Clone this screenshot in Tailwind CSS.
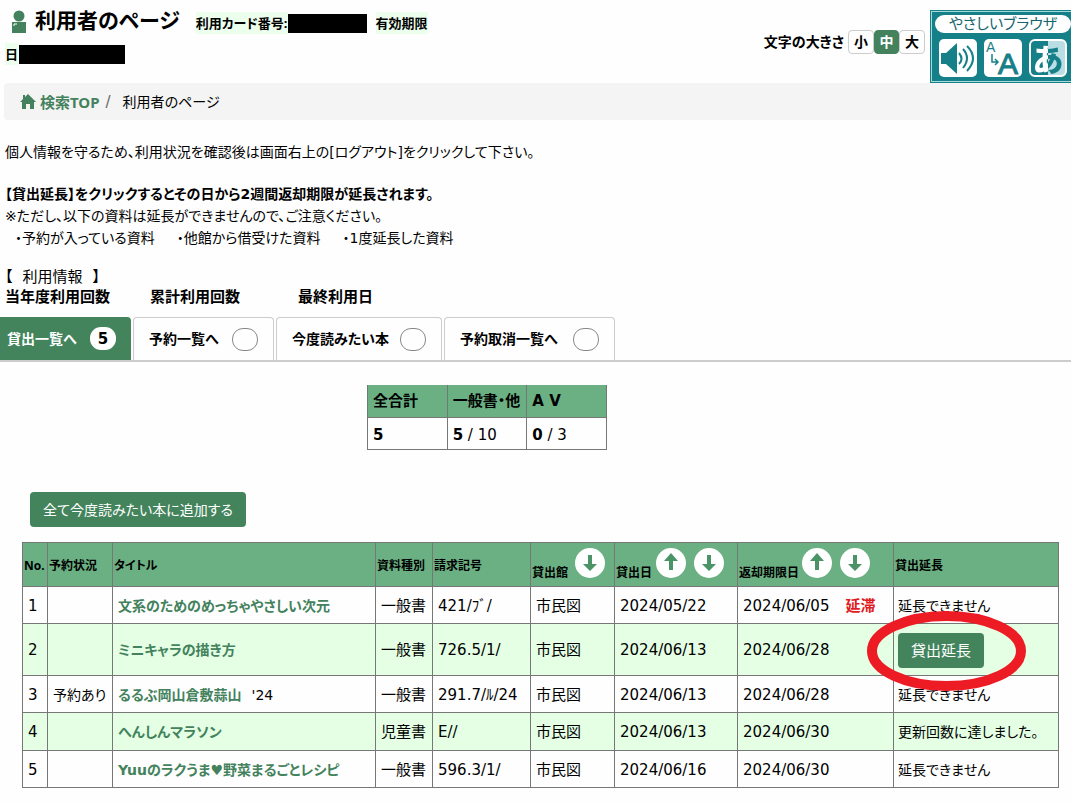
<!DOCTYPE html>
<html lang="ja">
<head>
<meta charset="utf-8">
<meta name="viewport" content="width=device-width, initial-scale=1">
<title>利用者のページ</title>
<script src="https://cdn.jsdelivr.net/npm/@tailwindcss/browser@4"></script>
</head>
<body class="bg-[#fefefe] text-black text-[15px] leading-[22px] font-['DejaVu_Sans','Noto_Sans_CJK_JP',sans-serif] [font-feature-settings:'palt'] overflow-x-hidden">
<svg class="hidden" aria-hidden="true">
  <symbol id="down" viewBox="0 0 30 30"><circle cx="15" cy="15" r="15" fill="#fff"/><path d="M13 7h4v9h5l-7 7-7-7h5z" fill="#4a9468"/></symbol>
  <symbol id="up" viewBox="0 0 30 30"><circle cx="15" cy="15" r="15" fill="#fff"/><path d="M13 22h4v-9h5l-7-8-7 8h5z" fill="#4a9468"/></symbol>
</svg>

<header class="flex h-[83px] justify-between">
  <div class="font-bold text-[13px] font-['Noto_Sans','Noto_Sans_CJK_JP',sans-serif]">
    <div class="flex items-center h-10 pl-[11px] whitespace-nowrap">
      <svg class="w-4 h-6 mt-1 mr-2" viewBox="0 0 16 24" fill="#43825d"><circle cx="8" cy="6" r="5.500"/><path d="M1 12h14v11H1z"/><path d="M3 16v-2h3" fill="none" stroke="#fff"/></svg>
      <h1 class="text-[21px] font-bold">利用者のページ</h1>
      <p class="flex items-center ml-4 mt-[6px]"><span class="bg-[#ecfeec]">利用カード番号:</span><span class="w-[79px] h-[19px] bg-black"></span><span class="ml-[9px] bg-[#ecfeec]">有効期限</span></p>
    </div>
    <p class="flex items-center mt-[3px] pl-[5px]"><span class="bg-[#ecfeec]">日</span><span class="ml-px w-[106px] h-[19px] bg-black"></span></p>
  </div>
  <div class="flex">
    <div class="flex items-center h-6 mt-[30px] mr-[5px] font-bold whitespace-nowrap">
      <span class="mr-1 text-[14px]">文字の大きさ</span>
      <button class="w-[26px] h-6 border border-[#ccc] rounded-sm text-[14px]">小</button>
      <button class="w-[25px] h-6 bg-[#43825d] text-white border border-[#43825d] rounded-sm text-[14px]">中</button>
      <button class="w-[26px] h-6 border border-[#ccc] rounded-sm text-[14px]">大</button>
    </div>
    <a href="#" class="mt-[10px] h-[73px] w-[141px] bg-[#168088] p-px pr-0 no-underline">
      <span class="block h-full border border-r-0 border-[#a7dadd] pl-[3px] pt-[3px]">
        <span class="block h-[18px] rounded-full bg-white text-center text-[15px] leading-[18px] text-[#15656c]">やさしいブラウザ</span>
        <span class="flex gap-[7px] pl-1 mt-[6px]">
          <svg class="w-[38px] h-[38px] shrink-0" viewBox="0 0 38 38"><rect width="38" height="38" rx="5" fill="#fff"/><path d="M2 14h5L18 4v31L7 25H2z" fill="#168088"/><g fill="none" stroke="#168088" stroke-width="2"><path d="M20 14q5 6 0 11M24 10q8 9 0 19M28 7q12 12 0 25"/></g></svg>
          <svg class="w-[38px] h-[38px] shrink-0 overflow-visible" viewBox="0 0 38 38"><rect width="38" height="38" rx="5" fill="#fff"/><text x="2" y="13" font-size="14" font-family="Liberation Sans" fill="#168088">A</text><text x="14" y="35" font-size="30" font-family="Liberation Sans" stroke="#168088" stroke-width="1" fill="#168088">A</text><path d="M8 15v8h6M11 20l3 3-3 3" fill="none" stroke="#168088" stroke-width="1.500"/></svg>
          <span class="block w-[38px] h-[38px] shrink-0 rounded-md border-2 border-white bg-linear-to-r from-[#168088] from-50% to-[#b9dfe4] to-50%"><span class="block text-center text-[31px] leading-[34px] font-black font-['Noto_Sans_CJK_JP',sans-serif] text-transparent bg-clip-text bg-linear-to-r from-white from-50% to-[#168088] to-50%">あ</span></span>
        </span>
      </span>
    </a>
  </div>
</header>

<nav class="flex items-center h-[37px] ml-1 pl-4 bg-[#f4f4f4] rounded-l">
  <a href="#" class="flex items-center font-bold text-[#43825d] font-['Noto_Sans','Noto_Sans_CJK_JP',sans-serif]"><svg class="w-4 h-4 mr-1" viewBox="0 0 16 16" fill="#43825d"><path d="M8 0l8 8h-2v7H10v-5H6v5H2V8H0l3-3V1h2v2z"/></svg>検索TOP</a>
  <span class="ml-[6px] mr-1 text-[#666]">/</span><span class="ml-2 text-[14px]">利用者のページ</span>
</nav>

<main>
  <div class="pl-[5px] text-[14px]">
    <p class="mt-[21px]">個人情報を守るため、利用状況を確認後は画面右上の[ログアウト]をクリックして下さい。</p>
    <p class="mt-5 font-bold">【貸出延長】をクリックするとその日から2週間返却期限が延長されます。</p>
    <p>※ただし、以下の資料は延長ができませんので、ご注意ください。</p>
    <p class="flex gap-[22px] pl-[10px]"><span>・予約が入っている資料</span><span>・他館から借受けた資料</span><span>・1度延長した資料</span></p>
    <p class="mt-[18px] flex gap-[10px] leading-5 text-[15px]"><span>【</span><span>利用情報</span><span>】</span></p>
    <p class="flex font-bold leading-5 text-[15px]"><span class="w-[145px]">当年度利用回数</span><span class="w-[148px]">累計利用回数</span><span>最終利用日</span></p>
  </div>

  <nav class="flex gap-[2px] mt-[10px] h-[45px] border-b-2 border-[#ccc] font-bold text-[14px] whitespace-nowrap">
    <a href="#" class="flex items-center justify-between w-[131px] pl-[7px] pr-[15px] bg-[#43845c] text-white rounded-tr">貸出一覧へ<span class="flex items-center justify-center w-[26px] h-[23px] rounded-[11px] bg-white text-black text-[15px]">5</span></a>
    <a href="#" class="flex items-center justify-between w-[141px] px-[15px] border border-b-0 border-[#ccc] rounded-t">予約一覧へ<span class="w-[26px] h-[23px] rounded-[11px] border border-[#888]"></span></a>
    <a href="#" class="flex items-center justify-between w-[166px] px-[15px] border border-b-0 border-[#ccc] rounded-t">今度読みたい本<span class="w-[26px] h-[23px] rounded-[11px] border border-[#888]"></span></a>
    <a href="#" class="flex items-center justify-between w-[171px] px-[15px] border border-b-0 border-[#ccc] rounded-t">予約取消一覧へ<span class="w-[26px] h-[23px] rounded-[11px] border border-[#888]"></span></a>
  </nav>

  <table class="table-fixed w-60 ml-[367px] mt-[23px] border-collapse text-left whitespace-nowrap [&_th]:border-x [&_th]:border-[#6e7b73] [&_td]:border [&_td]:border-[#777] [&_th]:px-[5px] [&_td]:px-[5px] [&_td]:pt-[3px]">
    <thead><tr class="h-8 bg-[#6bb083]"><th>全合計</th><th>一般書・他</th><th>A V</th></tr></thead>
    <tbody><tr class="h-8"><td><b>5</b></td><td><b>5</b> / 10</td><td><b>0</b> / 3</td></tr></tbody>
  </table>

  <button class="block ml-[30px] mt-[42px] w-[216px] h-[35px] pt-[2px] rounded bg-[#43845c] text-white text-[14px]">全て今度読みたい本に追加する</button>

  <div class="mt-[15px] ml-[22px] mr-3">
  <table class="table-fixed w-full border-collapse text-left whitespace-nowrap [&_th]:border [&_td]:border [&_th]:border-[#777] [&_td]:border-[#777] [&_td]:px-[5px] [&_td]:pt-[2px] [&_th]:px-px [&_th]:text-[12px] [&_th]:pt-1 [&_td:last-child]:text-[14px] [&_td:nth-child(2)]:text-[14px] [&_td:nth-child(3)]:text-[14px] [&_td:last-child]:pl-1">
    <colgroup><col class="w-[25px]"><col class="w-[65px]"><col><col class="w-[57px]"><col class="w-[98px]"><col class="w-[84px]"><col class="w-[123px]"><col class="w-[156px]"><col class="w-[165px]"></colgroup>
    <thead>
      <tr class="h-11 bg-[#6bb083] font-['Noto_Sans','Noto_Sans_CJK_JP',sans-serif]">
        <th>No.</th><th>予約状況</th><th>タイトル</th><th>資料種別</th><th>請求記号</th>
        <th><div class="flex items-end">貸出館<button aria-label="貸出館 降順" class="ml-[7px] mb-[6px]"><svg class="w-[30px] h-[30px]"><use href="#down"/></svg></button></div></th>
        <th><div class="flex items-end">貸出日<button aria-label="貸出日 昇順" class="ml-1 mb-[6px]"><svg class="w-[30px] h-[30px]"><use href="#up"/></svg></button><button aria-label="貸出日 降順" class="ml-2 mb-[6px]"><svg class="w-[30px] h-[30px]"><use href="#down"/></svg></button></div></th>
        <th><div class="flex items-end">返却期限日<button aria-label="返却期限日 昇順" class="ml-[3px] mb-[6px]"><svg class="w-[30px] h-[30px]"><use href="#up"/></svg></button><button aria-label="返却期限日 降順" class="ml-2 mb-[6px]"><svg class="w-[30px] h-[30px]"><use href="#down"/></svg></button></div></th>
        <th>貸出延長</th>
      </tr>
    </thead>
    <tbody>
      <tr class="h-[37px]"><td>1</td><td></td><td><a href="#" class="font-bold text-[#43825d]">文系のためのめっちゃやさしい次元</a></td><td>一般書</td><td>421/ﾌﾞ/</td><td>市民図</td><td>2024/05/22</td><td>2024/06/05<b class="ml-4 text-[#e01b22]">延滞</b></td><td>延長できません</td></tr>
      <tr class="h-[52px] bg-[#e4ffe4]"><td>2</td><td></td><td><a href="#" class="font-bold text-[#43825d]">ミニキャラの描き方</a></td><td>一般書</td><td>726.5/1/</td><td>市民図</td><td>2024/06/13</td><td>2024/06/28</td><td><div class="relative"><button class="block w-[86px] h-[35px] pt-[2px] rounded bg-[#43845c] text-white text-[15px]">貸出延長</button><svg class="absolute -left-8 -top-[22px] w-40 h-20 pointer-events-none" viewBox="0 0 160 80"><ellipse cx="80.500" cy="40" rx="74.500" ry="35" fill="none" stroke="#ed1c24" stroke-width="10"/></svg></div></td></tr>
      <tr class="h-[37px]"><td>3</td><td>予約あり</td><td><a href="#" class="font-bold text-[#43825d]">るるぶ岡山倉敷蒜山</a><span class="ml-[10px]">'24</span></td><td>一般書</td><td>291.7/ﾙ/24</td><td>市民図</td><td>2024/06/13</td><td>2024/06/28</td><td>延長できません</td></tr>
      <tr class="h-[38px] bg-[#e4ffe4]"><td>4</td><td></td><td><a href="#" class="font-bold text-[#43825d]">へんしんマラソン</a></td><td>児童書</td><td>E//</td><td>市民図</td><td>2024/06/13</td><td>2024/06/30</td><td>更新回数に達しました。</td></tr>
      <tr class="h-[37px]"><td>5</td><td></td><td><a href="#" class="font-bold text-[#43825d]">Yuuのラクうま♥野菜まるごとレシピ</a></td><td>一般書</td><td>596.3/1/</td><td>市民図</td><td>2024/06/16</td><td>2024/06/30</td><td>延長できません</td></tr>
    </tbody>
  </table>
  </div>
</main>
</body>
</html>
